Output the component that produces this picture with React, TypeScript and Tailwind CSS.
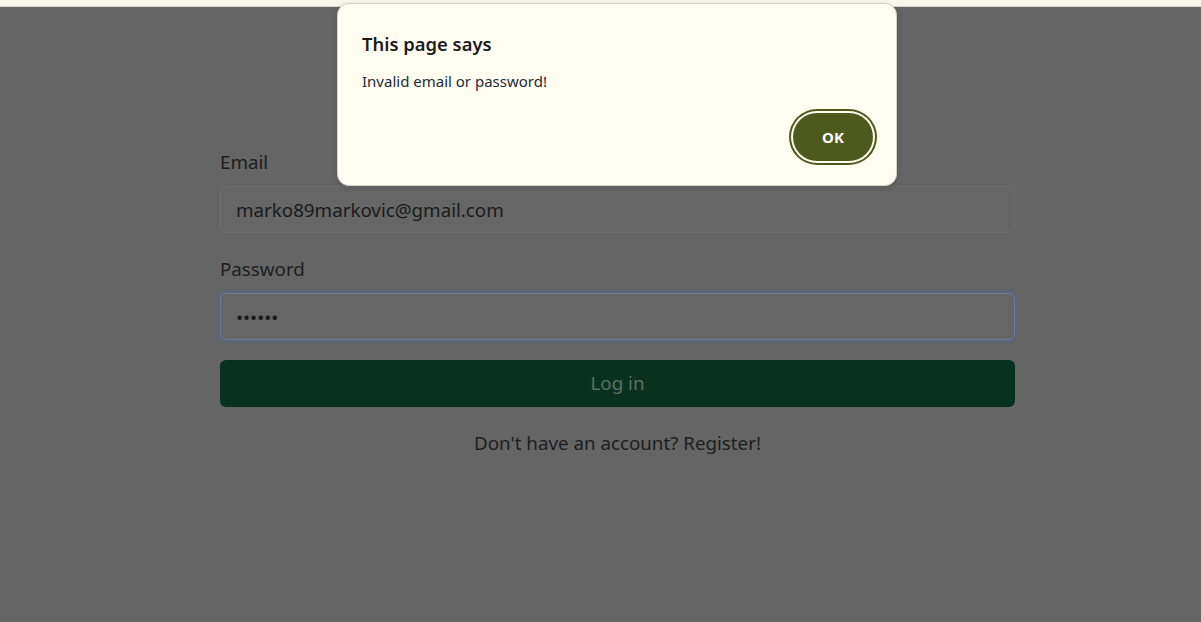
import React from "react";

const font = { fontFamily: '"Noto Sans", "Open Sans", sans-serif' };

const Field: React.FC<{ label: string; type: string; value: string; focused?: boolean }> = ({
  label,
  type,
  value,
  focused,
}) => (
  <div className="flex flex-col">
    <label className="text-[18.75px] leading-[27px] text-[#1d1e1f] mb-[11px]">{label}</label>
    <input
      readOnly
      type={type}
      value={value}
      className={
        "h-[47px] w-full rounded-[6px] bg-[#656665] px-[15px] text-[18.75px] text-[#1a1b1c] outline-none border " +
        (focused
          ? "border-[#707a96] shadow-[0_0_0_3px_#5d6579]"
          : "border-[#6e6f6e]")
      }
    />
  </div>
);

export default function App() {
  return (
    <div className="relative h-[622px] w-[1201px] overflow-hidden bg-[#646564]" style={font}>
      <div className="h-[6px] bg-[#f8f7ea]" />
      <div className="h-[1px] bg-[#d6d5ca]" />

      <form className="ml-[220px] w-[795px] pt-[141px] flex flex-col">
        <Field label="Email" type="email" value="marko89markovic@gmail.com" />
        <div className="mt-[22px]">
          <Field label="Password" type="password" value="123456" focused />
        </div>
        <button
          type="button"
          className="mt-[20px] h-[47px] w-full rounded-[6px] bg-[#08321f] text-[18.75px] text-[#5f6e64]"
        >
          Log in
        </button>
        <p className="mt-[22px] text-center text-[18.75px] leading-[27px] text-[#1d1e1f]">
          Don't have an account? Register!
        </p>
      </form>

      <div className="absolute left-[337px] top-[3px] w-[560px] h-[183px] rounded-[12px] border border-[#d3d2c6] bg-[#fffdf0] shadow-[0_2px_6px_rgba(0,0,0,0.15)] px-[24px] pt-[27px]">
        <h2 className="text-[18.4px] leading-[26px] font-semibold text-[#1b1b1b]">This page says</h2>
        <p className="mt-[14px] text-[15px] leading-[20px] text-[#1c2b38]">Invalid email or password!</p>
        <div className="absolute right-[23px] bottom-[24px]">
          <button
            type="button"
            className="h-[48px] w-[80px] rounded-full bg-[#4e5a1d] text-[15px] font-bold text-white shadow-[0_0_0_2px_#fffdf0,0_0_0_4px_#4e5a1d]"
          >
            OK
          </button>
        </div>
      </div>
    </div>
  );
}
